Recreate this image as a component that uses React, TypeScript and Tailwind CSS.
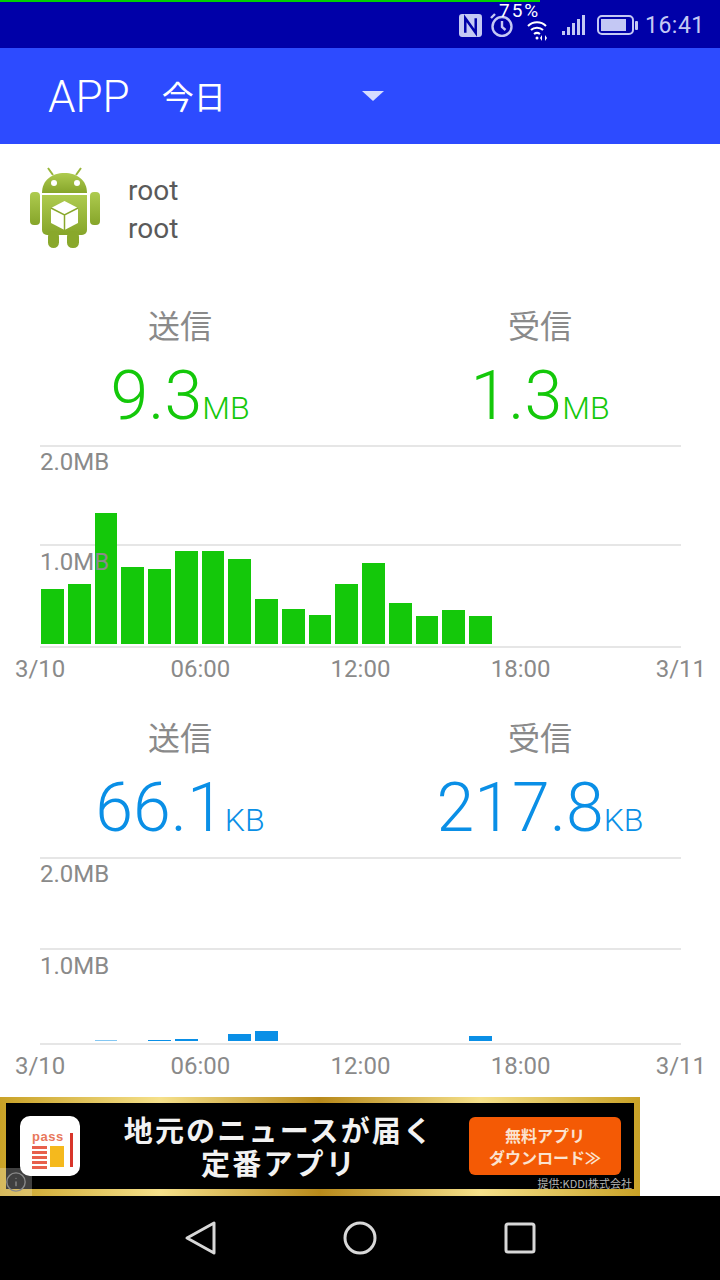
import { Info } from "lucide-react";

const FONT = "font-['Roboto','Noto_Sans_CJK_JP',sans-serif]";
const CJK = "font-['Noto_Sans_CJK_JP',sans-serif]";

const greenBars = [55, 60, 131, 77, 75, 93, 93, 85, 45, 35, 29, 60, 81, 41, 28, 34, 28];
const blueBars = [0, 0, 0.5, 0, 1, 2, 0, 7, 10, 0, 0, 0, 0, 0, 0, 0, 5];
const hours = ["3/10", "06:00", "12:00", "18:00", "3/11"];

const StatusIcons = () => (
  <div className="flex items-center h-[46px] justify-end text-[#c4c8f4]">
    {/* NFC */}
    <svg width="23" height="23" viewBox="0 0 22 22" className="mr-[8px]">
      <rect x="0" y="0" width="22" height="22" rx="3" fill="#c4c8f4" />
      <path d="M6 18V4l10 14V4" fill="none" stroke="#0000a8" strokeWidth="2.400" />
    </svg>
    {/* alarm */}
    <svg width="24" height="24" viewBox="0 0 24 24" fill="none" stroke="#c4c8f4" strokeWidth="2.400">
      <circle cx="12" cy="13.500" r="9.500" />
      <path d="M12 8v6l3.500 3M1 5l4-4" />
    </svg>
    <div className="relative w-[51px] h-[40px]">
      <span className={`absolute left-[-15px] top-[-4px] text-[19px] leading-[20px] tracking-[2px] text-white ${FONT}`}>75%</span>
      <svg width="24" height="22" viewBox="0 0 24 20" className="absolute left-[13px] top-[15px]" fill="none" stroke="#ffffff" strokeWidth="2">
        <path d="M1 5c5-5 13-5 18 0M4 9c3-3 9-3 12 0M7 13c2-1.500 4-1.500 6 0" />
        <circle cx="10" cy="17" r="1.500" fill="#ffffff" stroke="none" />
        <path d="M15 14v6l-2-3zM18 14v6l2-3z" fill="#ffffff" stroke="none" />
      </svg>
    </div>
    {/* signal */}
    <svg width="24" height="22" viewBox="0 0 24 22" fill="#c4c8f4" className="ml-[-3px] mr-[11px]">
      <rect x="0" y="17" width="3" height="4" />
      <rect x="5" y="13" width="3" height="8" />
      <rect x="10" y="9" width="3" height="12" />
      <rect x="15" y="5" width="3" height="16" />
      <rect x="20" y="1" width="3" height="20" />
    </svg>
    {/* battery */}
    <svg width="42" height="22" viewBox="0 0 42 22" className="mr-[6px]">
      <rect x="1" y="2" width="35" height="18" rx="4" fill="none" stroke="#c4c8f4" strokeWidth="2" />
      <rect x="4" y="5" width="25" height="12" fill="#c4c8f4" />
      <rect x="38" y="7" width="3" height="9" rx="1" fill="#c4c8f4" />
    </svg>
    <span className={`text-[23px] leading-none w-[59px] mr-[16px] ${FONT} tracking-[0.500px]`}>16:41</span>
  </div>
);

const AndroidIcon = () => (
  <svg width="76" height="86" viewBox="0 0 76 86">
    <defs>
      <linearGradient id="droid" x1="0" y1="0" x2="0" y2="1">
        <stop offset="0" stopColor="#aecb4f" />
        <stop offset="1" stopColor="#86a52a" />
      </linearGradient>
    </defs>
    <path d="M21 3l5 7M54 3l-5 7" stroke="#98b63a" strokeWidth="2" />
    <path d="M15 28c0-13 10-20 22.500-20s22.500 7 22.500 20z" fill="url(#droid)" />
    <circle cx="27" cy="18" r="3" fill="#fff" />
    <circle cx="50" cy="18" r="3" fill="#fff" />
    <rect x="3" y="27" width="10" height="33" rx="4" fill="url(#droid)" />
    <rect x="63" y="27" width="10" height="33" rx="4" fill="url(#droid)" />
    <path d="M15 30h45v35a5 5 0 0 1-5 5H20a5 5 0 0 1-5-5z" fill="url(#droid)" />
    <rect x="21" y="66" width="11" height="17" rx="5.500" fill="#89a82c" />
    <rect x="40" y="66" width="12" height="17" rx="5.500" fill="#89a82c" />
    <path d="M37.500 36l13.500 7v15l-13.500 7-13.500-7V43z" fill="#fff" />
    <path d="M24 43l13.500 7 13.500-7M37.500 50v15" fill="none" stroke="#89a82c" strokeWidth="1.500" />
  </svg>
);

const Chart = ({ bars, color, top, mid, bottom, barBottom, midLabelTop }: { bars: number[]; color: string; top: number; mid: number; bottom: number; barBottom: number; midLabelTop: number }) => {
  const height = bottom - top;
  return (
    <div className={`relative mx-[40px] w-[641px] ${FONT}`} style={{ height }}>
      <div className="absolute inset-x-0 top-0 h-[2px] bg-[#e6e6e6]" />
      <div className="absolute inset-x-0 h-[2px] bg-[#e6e6e6]" style={{ top: mid - top }} />
      <div className="absolute inset-x-0 bottom-0 h-[2px] bg-[#e6e6e6]" />
      <div className="absolute inset-x-0 flex items-end gap-[4px] pl-[1px]" style={{ bottom: bottom - barBottom }}>
        {bars.map((h, i) => (
          <div key={i} className="w-[22.750px]" style={{ height: Math.ceil(h), backgroundColor: color, opacity: h < 1 ? 0.5 : 1 }} />
        ))}
      </div>
      <span className="absolute left-0 top-[3px] text-[24px] leading-[28px] text-[#8a8a8a]">2.0MB</span>
      <span className="absolute left-0 text-[24px] leading-[28px] text-[#8a8a8a]" style={{ top: midLabelTop }}>1.0MB</span>
    </div>
  );
};

const Totals = ({ a, aUnit, b, bUnit, color }: { a: string; aUnit: string; b: string; bUnit: string; color: string }) => (
  <div className="grid grid-cols-2 w-[720px]">
    {[{ label: "送信", value: a, unit: aUnit }, { label: "受信", value: b, unit: bUnit }].map((col) => (
      <div key={col.label} className="flex flex-col items-center">
        <span className={`text-[32px] leading-[40px] text-[#8a8a8a] ${CJK}`}>{col.label}</span>
        <div className={`flex items-baseline h-[81px] pt-[22px] font-light ${FONT}`} style={{ color }}>
          <span className="text-[68px] leading-[60px]">{col.value}</span>
          <span className="text-[32px] leading-[32px]">{col.unit}</span>
        </div>
      </div>
    ))}
  </div>
);

const Axis = () => (
  <div className={`grid grid-cols-5 w-[801px] ml-[-40px] text-center text-[24px] leading-[28px] text-[#8a8a8a] ${FONT}`}>
    {hours.map((h) => (
      <span key={h}>{h}</span>
    ))}
  </div>
);

const Ad = () => (
  <div className="relative w-[640px] h-[99px] pt-[6px] pb-[7px] px-[6px] bg-[linear-gradient(90deg,#c9a227,#f5e08a_25%,#b88a1b_50%,#f5e08a_75%,#c9a227)]">
    <div className="flex items-center h-full bg-black pl-[14px] pr-[13px]">
      {/* pass logo */}
      <div className="flex w-[60px] h-[60px] rounded-[10px] bg-white pl-[12px] pt-[15px]">
        <div className="flex flex-col w-[33px]">
          <span className="text-[13px] leading-[11px] tracking-[0.500px] font-bold text-[#e8785c] font-['Liberation_Sans',sans-serif]">pass</span>
          <div className="flex gap-[3px] mt-[4px]">
            <div className="flex flex-col gap-[2px] w-[15px]">
              {[0, 1, 2, 3, 4].map((i) => (
                <div key={i} className="h-[3px] bg-[#e8604c]" />
              ))}
            </div>
            <div className="w-[14px] h-[21px] bg-[#f5b91d]" />
          </div>
        </div>
        <div className="w-[3px] h-[34px] mt-[2px] ml-[5px] bg-[#d8352a]" />
      </div>
      <div className={`flex-1 flex flex-col items-center pl-[9px] font-bold text-[#f2f2f2] text-[29px] leading-[33px] tracking-[2.200px] ${CJK}`}>
        <span>地元のニュースが届く</span>
        <span>定番アプリ</span>
      </div>
      <div className={`flex flex-col items-center justify-center w-[152px] h-[58px] mt-[-1px] rounded-[6px] bg-[#f45a05] text-[#fbe3d0] font-bold text-[16px] leading-[22px] ${CJK}`}>
        <span>無料アプリ</span>
        <span>ダウンロード≫</span>
      </div>
    </div>
    <span className={`absolute right-[8px] bottom-[7px] text-[11px] leading-[12px] text-[#b5b5b5] ${CJK}`}>提供:KDDI株式会社</span>
    <div className="absolute left-0 bottom-0 flex items-center justify-center w-[32px] h-[28px] bg-[#ffffff40]">
      <Info size={22} strokeWidth={1.500} className="text-[#8a8a8a]" />
    </div>
  </div>
);

export default function App() {
  return (
    <div className={`flex flex-col w-[720px] h-[1280px] overflow-hidden bg-white ${FONT}`}>
      {/* STATUS BAR */}
      <div className="h-[48px] bg-[#0000a8]">
        <div className="w-[540px] h-[2px] bg-[#00d000]" />
        <StatusIcons />
      </div>
      {/* APP BAR */}
      <div className="flex items-center h-[96px] bg-[#2d4bff] text-white pl-[48px]">
        <span className="text-[44px] font-light leading-none mt-[2px]">APP</span>
        <span className={`text-[32px] ml-[32px] leading-none mt-[-3px] ${CJK}`}>今日</span>
        <div className="ml-[136px] w-0 h-0 border-x-[11px] border-x-transparent border-t-[10px] border-t-[#d5dcff]" />
      </div>
      {/* APP INFO */}
      <div className="flex items-center h-[128px] pl-[27px]">
        <AndroidIcon />
        <div className="ml-[25px] mt-[4px] text-[28px] leading-[38px] text-[#5a5a5a]">
          <div>root</div>
          <div>root</div>
        </div>
      </div>
      <div className="h-[32px]" />
      <Totals a="9.3" aUnit="MB" b="1.3" bUnit="MB" color="#14c80a" />
      <div className="h-[20px]" />
      <Chart bars={greenBars} color="#14c80a" top={445} mid={544} bottom={648} barBottom={644} midLabelTop={103} />
      <div className="h-[7px]" />
      <Axis />
      <div className="h-[33px]" />
      <Totals a="66.1" aUnit="KB" b="217.8" bUnit="KB" color="#0a8fe6" />
      <div className="h-[20px]" />
      <Chart bars={blueBars} color="#0a8fe6" top={857} mid={948} bottom={1045} barBottom={1041} midLabelTop={95} />
      <div className="h-[7px]" />
      <Axis />
      <div className="flex-1 flex flex-col justify-end">
        <Ad />
      </div>
      {/* NAV BAR */}
      <div className="flex items-center justify-center gap-[113px] h-[84px] bg-black text-[#d8d8d8]">
        <svg width="58" height="36" viewBox="0 0 58 36" fill="none" stroke="currentColor" strokeWidth="3">
          <path d="M43 3v30L16 18z" strokeLinejoin="round" />
        </svg>
        <svg width="36" height="36" viewBox="0 0 36 36" fill="none" stroke="currentColor" strokeWidth="3">
          <circle cx="18" cy="18" r="15" />
        </svg>
        <svg width="58" height="36" viewBox="0 0 58 36" fill="none" stroke="currentColor" strokeWidth="3">
          <rect x="15" y="4" width="28" height="28" rx="2" />
        </svg>
      </div>
    </div>
  );
}
